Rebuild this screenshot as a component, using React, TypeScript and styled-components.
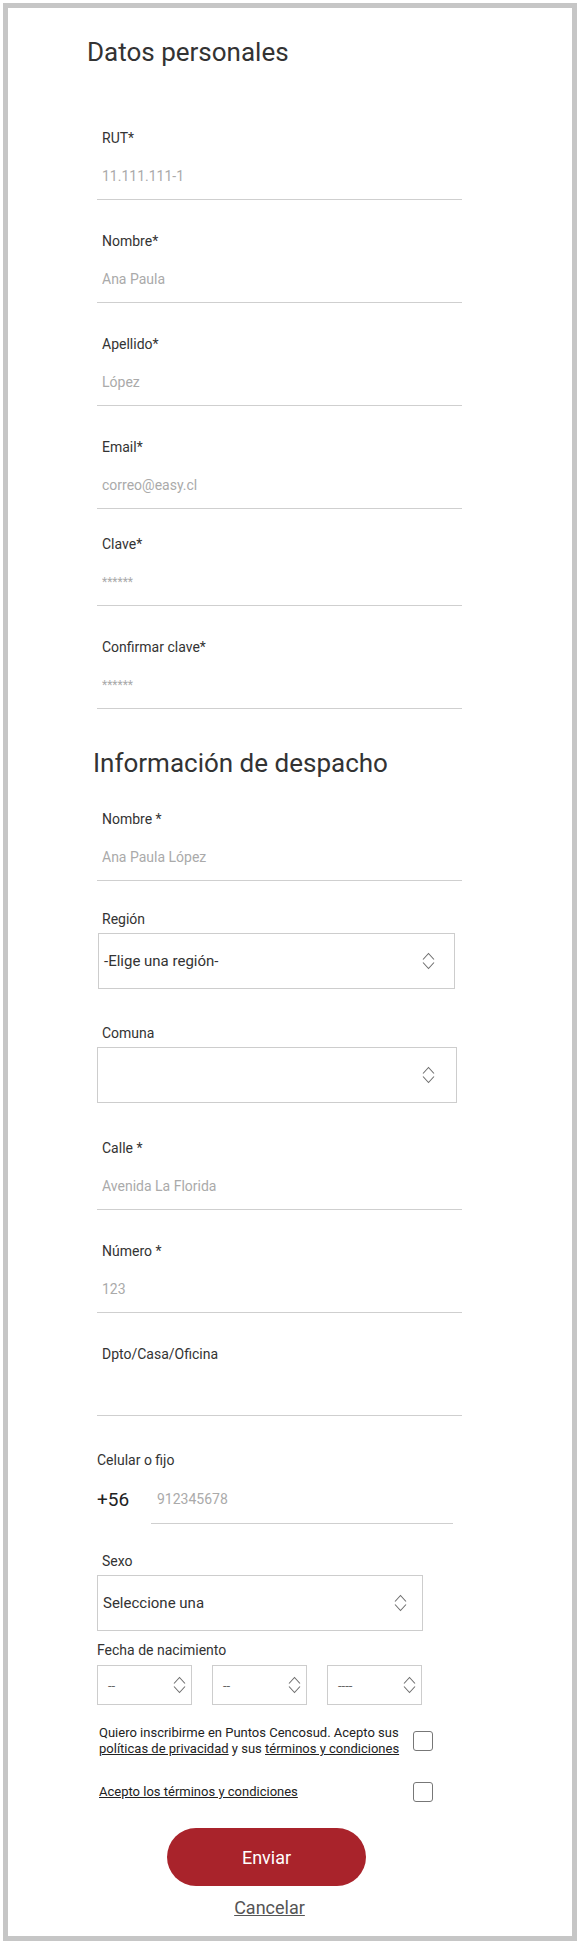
import React from 'react'
import styled, { createGlobalStyle } from 'styled-components'

const GlobalStyle = createGlobalStyle`
  * {
    box-sizing: border-box;
  }
  body {
    margin: 0;
    background: #fff;
    font-family: Roboto, 'Liberation Sans', Arial, sans-serif;
  }
`

const Frame = styled.div`
  margin: 3px;
  height: 1938px;
  border: 5px solid #c6c6c6;
  background: #fff;
  padding: 29px 0 0 89px;
`

const Form = styled.form`
  width: 365px;
  display: flex;
  flex-direction: column;
`

const SectionTitle = styled.h2<{ $shift: number; $top?: number; $bottom?: number }>`
  margin: ${(p) => p.$top ?? 0}px 0 ${(p) => p.$bottom ?? 0}px ${(p) => p.$shift}px;
  font-size: 26px;
  font-weight: 400;
  line-height: 30px;
  color: #333;
`

const Field = styled.label<{ $top?: number }>`
  display: block;
  padding: ${(p) => p.$top ?? 33}px 0 15px;
  border-bottom: 1px solid #cfcfcf;
`

const Label = styled.span<{ $indent?: number }>`
  display: block;
  padding-left: ${(p) => p.$indent ?? 5}px;
  font-size: 14px;
  line-height: 16px;
  color: #333;
`

const Input = styled.input<{ $small?: boolean }>`
  display: block;
  width: 100%;
  height: 16px;
  margin-top: 22px;
  padding: 0 0 0 5px;
  border: none;
  outline: none;
  background: transparent;
  font-family: Roboto, 'Liberation Sans', Arial, sans-serif;
  font-size: ${(p) => (p.$small ? 12 : 14)}px;
  color: #333;
  &::placeholder {
    color: #aaa;
  }
`

const SelectField = styled.div<{ $top: number; $bottom?: number }>`
  padding: ${(p) => p.$top}px 0 ${(p) => p.$bottom ?? 0}px;
`

const SelectBox = styled.div<{ $width: number; $height: number; $right: number; $shift?: number; $gap?: number }>`
  display: flex;
  align-items: center;
  justify-content: space-between;
  width: ${(p) => p.$width}px;
  height: ${(p) => p.$height}px;
  margin: ${(p) => p.$gap ?? 6}px 0 0 ${(p) => p.$shift ?? 0}px;
  padding: 0 ${(p) => p.$right}px 0 5px;
  border: 1px solid #cdcdcd;
  background: #fff;
`

const SelectText = styled.span<{ $muted?: boolean }>`
  font-size: ${(p) => (p.$muted ? 13 : 15)}px;
  color: ${(p) => (p.$muted ? '#666' : '#333')};
  padding-left: ${(p) => (p.$muted ? 5 : 0)}px;
`

const PhoneField = styled.div`
  padding-top: 36px;
`

const PhoneRow = styled.div`
  display: flex;
  margin-top: 16px;
`

const Prefix = styled.span`
  width: 54px;
  font-size: 19px;
  line-height: 31px;
  color: #222;
`

const PhoneInput = styled.input`
  width: 302px;
  height: 40px;
  padding: 0 0 9px 6px;
  border: none;
  border-bottom: 1px solid #cfcfcf;
  outline: none;
  font-family: Roboto, 'Liberation Sans', Arial, sans-serif;
  font-size: 14px;
  color: #333;
  &::placeholder {
    color: #aaa;
  }
`

const DateRow = styled.div`
  display: grid;
  grid-template-columns: repeat(3, 95px);
  column-gap: 20px;
`

const ConsentRow = styled.label<{ $top: number }>`
  display: flex;
  align-items: center;
  margin: ${(p) => p.$top}px 0 0 2px;
`

const ConsentText = styled.span`
  flex: 0 0 302px;
  font-size: 13px;
  line-height: 16px;
  color: #222;
  white-space: nowrap;
`

const TextLink = styled.a`
  color: inherit;
  text-decoration: underline;
`

const Check = styled.input`
  appearance: none;
  flex: 0 0 20px;
  width: 20px;
  height: 20px;
  margin: 0 0 0 12px;
  border: 1px solid #777;
  border-radius: 3px;
  background: #fff;
`

const Actions = styled.div`
  display: flex;
  flex-direction: column;
  align-items: center;
  width: 199px;
  margin: 26px 0 0 70px;
`

const SubmitButton = styled.button`
  width: 199px;
  height: 58px;
  border: none;
  border-radius: 29px;
  background: #a9232b;
  color: #fff;
  font-family: Roboto, 'Liberation Sans', Arial, sans-serif;
  font-size: 18px;
`

const CancelLink = styled.a`
  margin-top: 11px;
  padding-left: 6px;
  font-size: 18px;
  line-height: 22px;
  color: #555;
  text-decoration: underline;
`

const Chevrons = () => (
  <svg width="13" height="18" viewBox="0 0 13 18" fill="none" stroke="#6f6f6f" strokeWidth="1.1">
    <polyline points="1,7.5 6.5,1.5 12,7.5" />
    <polyline points="1,10.5 6.5,16.5 12,10.5" />
  </svg>
)

type TextFieldProps = {
  label: string
  placeholder?: string
  top?: number
  password?: boolean
}

const TextField = ({ label, placeholder, top, password }: TextFieldProps) => (
  <Field $top={top}>
    <Label>{label}</Label>
    <Input type={password ? 'password' : 'text'} placeholder={placeholder} $small={password} />
  </Field>
)

const App = () => (
  <>
    <GlobalStyle />
    <Frame>
      <Form>
        <SectionTitle $shift={-10} $bottom={30}>
          Datos personales
        </SectionTitle>
        <TextField label="RUT*" placeholder="11.111.111-1" />
        <TextField label="Nombre*" placeholder="Ana Paula" />
        <TextField label="Apellido*" placeholder="López" />
        <TextField label="Email*" placeholder="correo@easy.cl" />
        <TextField label="Clave*" placeholder="******" top={27} password />
        <TextField label="Confirmar clave*" placeholder="******" password />

        <SectionTitle $shift={-4} $top={39}>
          Información de despacho
        </SectionTitle>
        <TextField label="Nombre *" placeholder="Ana Paula López" />
        <SelectField $top={30}>
          <Label>Región</Label>
          <SelectBox $width={357} $height={56} $right={19} $shift={1}>
            <SelectText>-Elige una región-</SelectText>
            <Chevrons />
          </SelectBox>
        </SelectField>
        <SelectField $top={36} $bottom={4}>
          <Label>Comuna</Label>
          <SelectBox $width={360} $height={56} $right={21}>
            <span />
            <Chevrons />
          </SelectBox>
        </SelectField>
        <TextField label="Calle *" placeholder="Avenida La Florida" />
        <TextField label="Número *" placeholder="123" />
        <TextField label="Dpto/Casa/Oficina" />

        <PhoneField>
          <Label $indent={0}>Celular o fijo</Label>
          <PhoneRow>
            <Prefix>+56</Prefix>
            <PhoneInput placeholder="912345678" />
          </PhoneRow>
        </PhoneField>

        <SelectField $top={29}>
          <Label>Sexo</Label>
          <SelectBox $width={326} $height={56} $right={15}>
            <SelectText>Seleccione una</SelectText>
            <Chevrons />
          </SelectBox>
        </SelectField>

        <SelectField $top={11}>
          <Label $indent={0}>Fecha de nacimiento</Label>
          <DateRow>
            {['--', '--', '----'].map((v, i) => (
              <SelectBox key={i} $width={95} $height={40} $right={5} $gap={7}>
                <SelectText $muted>{v}</SelectText>
                <Chevrons />
              </SelectBox>
            ))}
          </DateRow>
        </SelectField>

        <ConsentRow $top={20}>
          <ConsentText>
            Quiero inscribirme en Puntos Cencosud. Acepto sus
            <br />
            <TextLink href="#">políticas de privacidad</TextLink> y sus{' '}
            <TextLink href="#">términos y condiciones</TextLink>
          </ConsentText>
          <Check type="checkbox" />
        </ConsentRow>
        <ConsentRow $top={25}>
          <ConsentText>
            <TextLink href="#">Acepto los términos y condiciones</TextLink>
          </ConsentText>
          <Check type="checkbox" />
        </ConsentRow>

        <Actions>
          <SubmitButton type="button">Enviar</SubmitButton>
          <CancelLink href="#">Cancelar</CancelLink>
        </Actions>
      </Form>
    </Frame>
  </>
)

export default App
